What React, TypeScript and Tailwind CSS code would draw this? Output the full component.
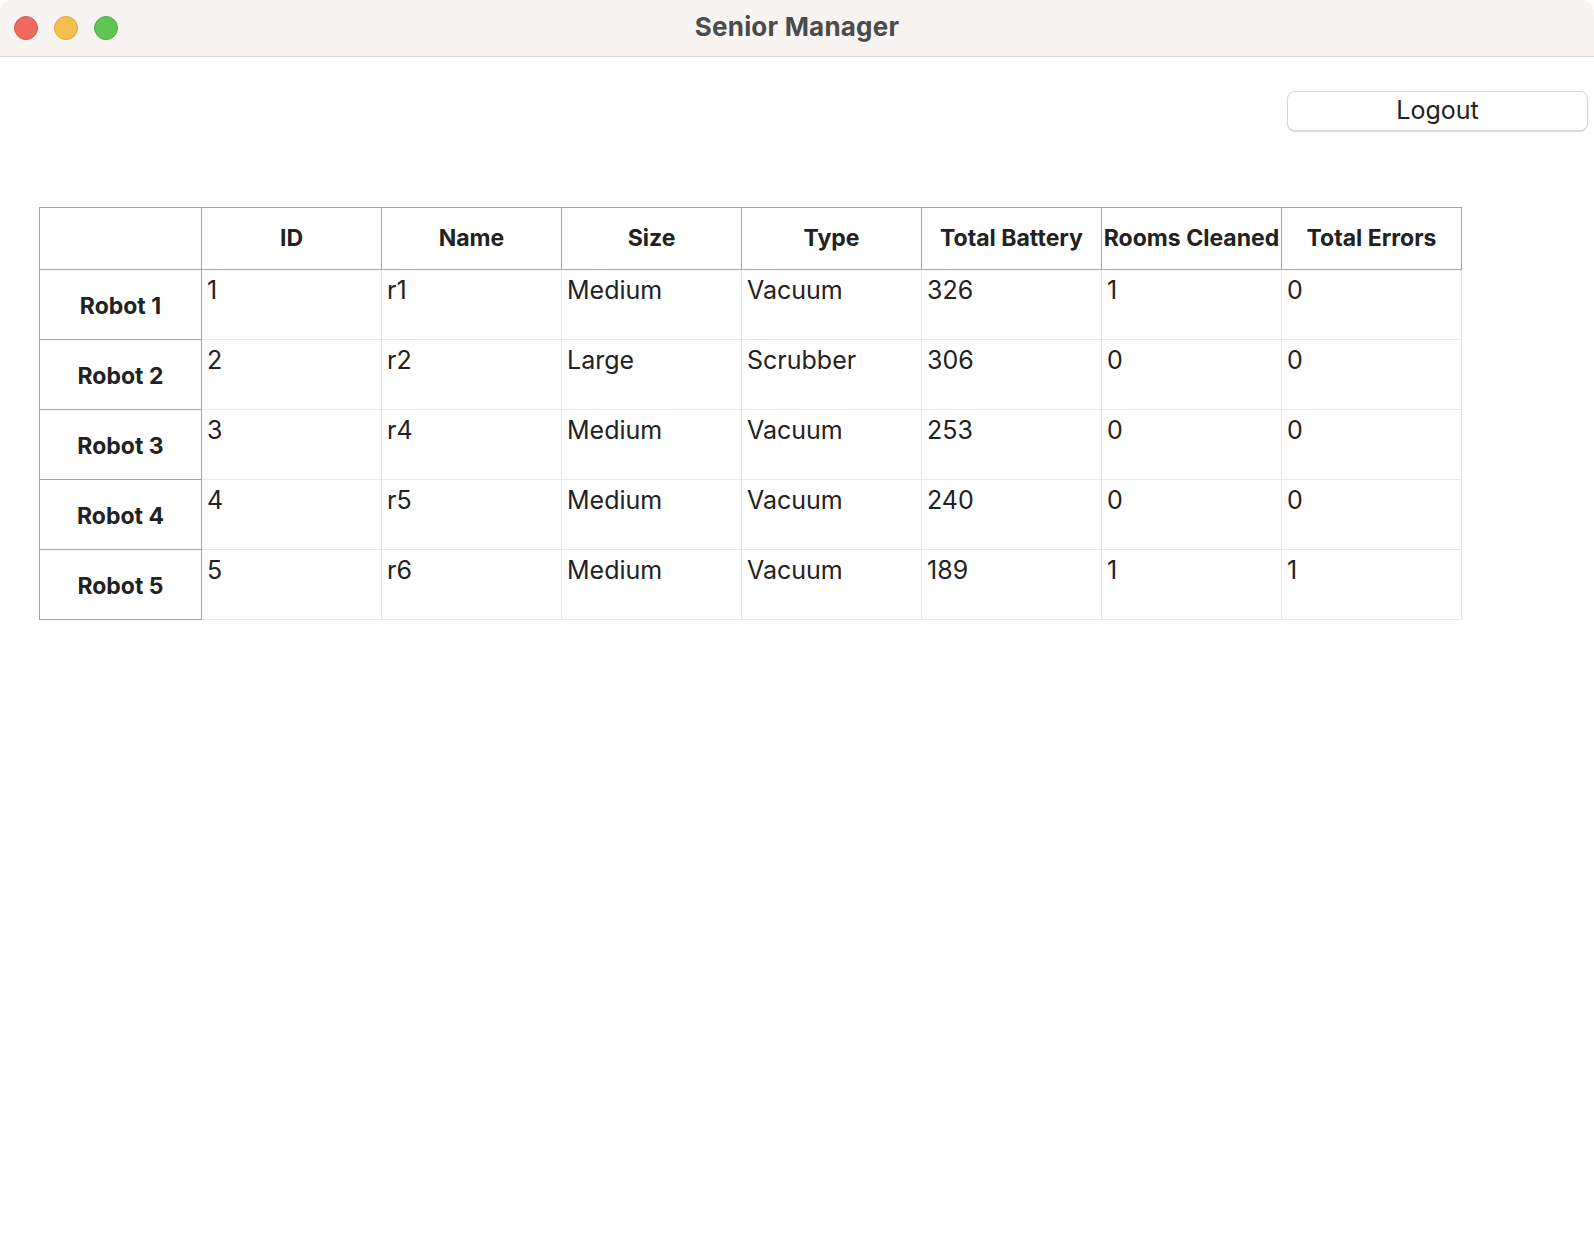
const columns = ["ID", "Name", "Size", "Type", "Total Battery", "Rooms Cleaned", "Total Errors"];

const robots = [
  ["1", "r1", "Medium", "Vacuum", "326", "1", "0"],
  ["2", "r2", "Large", "Scrubber", "306", "0", "0"],
  ["3", "r4", "Medium", "Vacuum", "253", "0", "0"],
  ["4", "r5", "Medium", "Vacuum", "240", "0", "0"],
  ["5", "r6", "Medium", "Vacuum", "189", "1", "1"],
];

function TitleBar() {
  return (
    <div className="h-[57px] bg-[#f8f4f1] border-b border-[#dcd8d5] flex items-center relative">
      <div className="flex items-center gap-[16px] pl-[14px]">
        <span className="w-[24px] h-[24px] rounded-full bg-[#ee6a5f] border border-[#d65a50]" />
        <span className="w-[24px] h-[24px] rounded-full bg-[#f5bf4f] border border-[#dfa53a]" />
        <span className="w-[24px] h-[24px] rounded-full bg-[#61c554] border border-[#50ad45]" />
      </div>
      <div className="absolute inset-x-0 top-0 h-[53px] flex items-center justify-center pointer-events-none">
        <span className="text-[26px] font-bold text-[#4b4b4b] tracking-[0.2px]">Senior Manager</span>
      </div>
    </div>
  );
}

function RobotTable() {
  return (
    <div className="ml-[39px] mt-[76px] grid grid-cols-[162px_repeat(7,180px)] w-max border-t border-l border-[#a4a4a4]">
      <div className="h-[62px] border-r border-b border-[#a4a4a4]" />
      {columns.map((c) => (
        <div
          key={c}
          className="h-[62px] border-r border-b border-[#a4a4a4] flex items-center justify-center text-[23px] font-bold text-[#222] whitespace-nowrap"
        >
          {c}
        </div>
      ))}
      {robots.map((row, i) => (
        <div key={i} className="contents">
          <div className="h-[70px] border-r border-b border-[#a4a4a4] flex items-center justify-center pt-[4px] text-[23px] font-bold text-[#222]">
            Robot {i + 1}
          </div>
          {row.map((v, j) => (
            <div key={j} className="h-[70px] border-r border-b border-[#e8e8e8] pl-[5px] pt-[2px] text-[25px] text-[#222]">
              {v}
            </div>
          ))}
        </div>
      ))}
    </div>
  );
}

export default function App() {
  return (
    <div className="w-[1594px] h-[1256px] bg-white overflow-hidden rounded-[12px] font-['Inter',_'Liberation_Sans',_sans-serif]">
      <TitleBar />
      <div className="flex justify-end pt-[34px] pr-[6px]">
        <button className="w-[301px] h-[40px] rounded-[8px] border border-[#d6d6d6] bg-white shadow-[0_1px_1px_rgba(0,0,0,0.15)] text-[25px] leading-none pb-[2px] text-[#222]">
          Logout
        </button>
      </div>
      <RobotTable />
    </div>
  );
}
